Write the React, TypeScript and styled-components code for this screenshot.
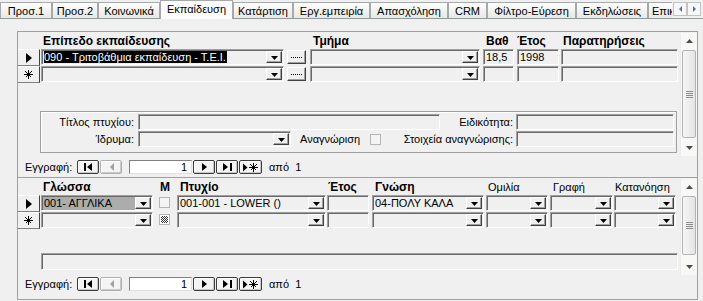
import React from 'react';
import styled, { createGlobalStyle } from 'styled-components';

const GlobalStyle = createGlobalStyle`
  html, body {
    margin: 0;
    padding: 0;
    background: #f0f0f0;
  }
  body {
    font-family: "Liberation Sans", Arial, sans-serif;
    font-size: 11px;
    color: #000;
  }
`;

type Kind = 'combo' | 'text' | 'dots' | 'check';

type Col = {
  key: string;
  w: number;
  ml: number;
  kind: Kind;
  label?: string;
  pad?: number;
  bold?: boolean;
};

type Cell = { value?: string; hl?: 'dark' | 'gray'; state?: 'off' | 'null' };
type Row = { current?: boolean; cells: Record<string, Cell> };

const eduCols: Col[] = [
  { key: 'level', w: 243, ml: 1, kind: 'combo', label: 'Επίπεδο εκπαίδευσης', pad: 2, bold: true },
  { key: 'more', w: 19, ml: 3, kind: 'dots' },
  { key: 'dept', w: 170, ml: 4, kind: 'combo', label: 'Τμήμα', pad: 3, bold: true },
  { key: 'grade', w: 31, ml: 3, kind: 'text', label: 'Βαθ', pad: 3, bold: true },
  { key: 'year', w: 42, ml: 3, kind: 'text', label: 'Έτος', pad: 0, bold: true },
  { key: 'notes', w: 117, ml: 2, kind: 'text', label: 'Παρατηρήσεις', pad: 2, bold: true },
];

const eduRows: Row[] = [
  {
    current: true,
    cells: {
      level: { value: '090 - Τριτοβάθμια εκπαίδευση - Τ.Ε.Ι.', hl: 'dark' },
      grade: { value: '18,5' },
      year: { value: '1998' },
    },
  },
  { cells: {} },
];

const langCols: Col[] = [
  { key: 'lang', w: 112, ml: 1, kind: 'combo', label: 'Γλώσσα', pad: 2, bold: true },
  { key: 'm', w: 11, ml: 6, kind: 'check', label: 'Μ', pad: 1, bold: true },
  { key: 'degree', w: 149, ml: 7, kind: 'combo', label: 'Πτυχίο', pad: 3, bold: true },
  { key: 'year', w: 42, ml: 1, kind: 'text', label: 'Έτος', pad: 1, bold: true },
  { key: 'skill', w: 112, ml: 3, kind: 'combo', label: 'Γνώση', pad: 3, bold: true },
  { key: 'speak', w: 62, ml: 2, kind: 'combo', label: 'Ομιλία', pad: 2 },
  { key: 'write', w: 63, ml: 2, kind: 'combo', label: 'Γραφή', pad: 3 },
  { key: 'read', w: 62, ml: 1, kind: 'combo', label: 'Κατανόηση', pad: 1 },
];

const langRows: Row[] = [
  {
    current: true,
    cells: {
      lang: { value: '001- ΑΓΓΛΙΚΑ', hl: 'gray' },
      m: { state: 'off' },
      degree: { value: '001-001 - LOWER ()' },
      skill: { value: '04-ΠΟΛΥ ΚΑΛΑ' },
    },
  },
  { cells: { m: { state: 'null' } } },
];

const tabs = [
  { label: 'Προσ.1', w: 52 },
  { label: 'Προσ.2', w: 46 },
  { label: 'Κοινωνικά', w: 62 },
  { label: 'Εκπαίδευση', w: 73, active: true },
  { label: 'Κατάρτιση', w: 60 },
  { label: 'Εργ.εμπειρία', w: 77 },
  { label: 'Απασχόληση', w: 78 },
  { label: 'CRM', w: 39 },
  { label: 'Φίλτρο-Εύρεση', w: 89 },
  { label: 'Εκδηλώσεις', w: 72 },
];

/* ---------- window and tabs ---------- */

const Window = styled.div`
  width: 703px;
  height: 301px;
  overflow: hidden;
  background: #f0f0f0;
`;

const TabStrip = styled.div`
  display: flex;
  align-items: flex-end;
  height: 19px;
  background: linear-gradient(to top, #919b9c 1px, transparent 1px);
`;

const Tab = styled.div<{ $w: number; $active?: boolean; $cut?: boolean }>`
  flex: none;
  box-sizing: border-box;
  width: ${p => p.$w}px;
  height: ${p => (p.$active ? 19 : 16)}px;
  margin-bottom: ${p => (p.$active ? 0 : 1)}px;
  padding: 2px 0 0 ${p => (p.$cut ? 3 : 0)}px;
  border: 1px solid #a5a9ab;
  border-bottom: none;
  ${p => p.$cut && 'border-right: none;'}
  background: ${p => (p.$active ? '#fcfcfe' : 'linear-gradient(#ffffff, #f0f0ee 60%, #e8e8e5)')};
  text-align: ${p => (p.$cut ? 'left' : 'center')};
  white-space: nowrap;
  overflow: hidden;
  line-height: 12px;
`;

const TabScroll = styled.div`
  display: flex;
  align-self: flex-start;
  margin-top: 2px;
  margin-left: 1px;
`;

const TabArrow = styled.div`
  display: flex;
  align-items: center;
  justify-content: center;
  box-sizing: border-box;
  width: 14px;
  height: 14px;
  border: 1px solid #c3c3c3;
  background: #f7f7f7;
`;

const Panel = styled.div`
  display: flex;
  flex-direction: column;
  padding: 12px 0 0 17px;
`;

/* ---------- subform frame ---------- */

const SubForm = styled.div<{ $h: number; $joined?: boolean }>`
  display: flex;
  flex-direction: column;
  box-sizing: border-box;
  width: 681px;
  height: ${p => p.$h}px;
  border: 1px solid #a0a0a0;
  ${p => p.$joined && 'border-top: none;'}
`;

const SubBody = styled.div<{ $h: number }>`
  display: flex;
  height: ${p => p.$h}px;
`;

const Content = styled.div`
  flex: 1;
  display: flex;
  flex-direction: column;
`;

const HeaderRow = styled.div`
  display: flex;
  height: 17px;
  padding-left: 22px;
  align-items: center;
`;

const HeaderCell = styled.div<{ $w: number; $ml: number; $pad: number; $bold?: boolean }>`
  flex: none;
  width: ${p => p.$w}px;
  margin-left: ${p => p.$ml}px;
  padding-left: ${p => p.$pad}px;
  box-sizing: border-box;
  white-space: nowrap;
  font-size: ${p => (p.$bold ? 12 : 11)}px;
  font-weight: ${p => (p.$bold ? 700 : 400)};
  line-height: 14px;
`;

const DataRow = styled.div`
  display: flex;
  height: 17px;
`;

const Selector = styled.div`
  flex: none;
  display: flex;
  align-items: center;
  justify-content: center;
  box-sizing: border-box;
  width: 22px;
  height: 17px;
  border-top: 1px solid #ffffff;
  border-right: 1px solid #404040;
  border-bottom: 1px solid #808080;
  background: #f0f0f0;
`;

/* ---------- controls ---------- */

const Field = styled.div<{ $w: number; $ml: number; $h?: number; $mt?: number }>`
  flex: none;
  display: flex;
  align-items: flex-end;
  box-sizing: border-box;
  width: ${p => p.$w}px;
  height: ${p => p.$h ?? 16}px;
  margin-left: ${p => p.$ml}px;
  margin-top: ${p => p.$mt ?? 0}px;
  border: 1px solid;
  border-color: #a0a0a0 #ffffff #ffffff #a0a0a0;
  box-shadow: inset 1px 1px 0 #696969;
  overflow: hidden;
`;

const FieldText = styled.div<{ $gray?: boolean }>`
  flex: 1;
  align-self: stretch;
  margin: 1px 0 0 1px;
  padding: 0 2px 0 1px;
  line-height: 13px;
  white-space: nowrap;
  overflow: hidden;
  background: ${p => (p.$gray ? '#acacac' : 'transparent')};
`;

const Picked = styled.span`
  background: #000;
  color: #fff;
  padding-right: 1px;
`;

const DropButton = styled.div`
  flex: none;
  display: flex;
  align-items: flex-end;
  justify-content: center;
  box-sizing: border-box;
  width: 16px;
  height: 12px;
  margin: 0 1px 1px 0;
  padding-bottom: 2px;
  border: 1px solid;
  border-color: #ffffff #404040 #404040 #ffffff;
  box-shadow: inset -1px -1px 0 #a0a0a0;
  background: #f0f0f0;
`;

const DotsButton = styled.div<{ $w: number; $ml: number }>`
  flex: none;
  display: flex;
  align-items: center;
  justify-content: center;
  box-sizing: border-box;
  width: ${p => p.$w}px;
  height: 14px;
  margin: 1px 0 0 ${p => p.$ml}px;
  border: 1px solid;
  border-color: #ffffff #404040 #404040 #ffffff;
  box-shadow: inset -1px -1px 0 #a0a0a0;
  background: #f0f0f0;

  &::after {
    content: '';
    width: 11px;
    border-top: 1px dotted #000;
  }
`;

const CheckBox = styled.div<{ $w?: number; $ml: number; $null?: boolean; $top?: number }>`
  flex: none;
  box-sizing: border-box;
  width: ${p => p.$w ?? 11}px;
  height: 11px;
  margin-left: ${p => p.$ml}px;
  margin-top: ${p => p.$top ?? 0}px;
  padding: ${p => (p.$null ? '1px' : '0')};
  border: 1px solid #b5b5b5;
  background: ${p =>
    p.$null
      ? 'repeating-conic-gradient(#303030 0 25%, #ffffff 0 50%) 1px 1px / 2px 2px content-box, #ffffff'
      : '#f4f4f4'};
`;

/* ---------- footer group of first subform ---------- */

const Group = styled.div`
  display: flex;
  flex-direction: column;
  gap: 1px;
  box-sizing: border-box;
  width: 637px;
  height: 42px;
  margin: 28px 0 0 22px;
  padding-top: 2px;
  border: 1px solid #a0a0a0;
  box-shadow: inset 1px 1px 0 #ffffff;
`;

const GroupRow = styled.div`
  display: flex;
  align-items: center;
  height: 16px;
`;

const FormLabel = styled.div<{ $w: number; $ml?: number; $left?: boolean }>`
  flex: none;
  box-sizing: border-box;
  width: ${p => p.$w}px;
  margin-left: ${p => p.$ml ?? 0}px;
  padding-right: 1px;
  text-align: ${p => (p.$left ? 'left' : 'right')};
  white-space: nowrap;
  line-height: 13px;
`;

/* ---------- scroll bar ---------- */

const ScrollBar = styled.div<{ $h: number }>`
  flex: none;
  display: flex;
  flex-direction: column;
  width: 16px;
  height: ${p => p.$h}px;
  margin-top: 1px;
  background: #f8f8f6;
  border-left: 1px solid #ececec;
`;

const ScrollArrow = styled.div`
  flex: none;
  display: flex;
  align-items: center;
  justify-content: center;
  height: 16px;
`;

const Thumb = styled.div<{ $h: number }>`
  flex: none;
  display: flex;
  align-items: center;
  justify-content: center;
  box-sizing: border-box;
  height: ${p => p.$h}px;
  margin: 1px 1px 0 1px;
  border: 1px solid #b4b4b4;
  border-radius: 2px;
  background: linear-gradient(to right, #f6f6f6, #e4e4e4);
`;

const Grip = styled.div`
  width: 7px;
  height: 7px;
  background: repeating-linear-gradient(#8c8c8c 0 1px, transparent 1px 2px);
`;

const Track = styled.div`
  flex: 1;
`;

/* ---------- navigation bar ---------- */

const NavBar = styled.div<{ $mt: number }>`
  display: flex;
  align-items: center;
  height: 14px;
  margin-top: ${p => p.$mt}px;
  padding-left: 7px;
`;

const NavLabel = styled.div`
  width: 52px;
  line-height: 13px;
`;

const NavButton = styled.div<{ $ml: number; $w?: number; $off?: boolean }>`
  flex: none;
  display: flex;
  align-items: center;
  justify-content: center;
  box-sizing: border-box;
  width: ${p => p.$w ?? 22}px;
  height: 14px;
  margin-left: ${p => p.$ml}px;
  border: 1px solid ${p => (p.$off ? '#b0b0b0' : '#3c3c3c')};
  border-radius: 2px;
  background: #f4f4f4;
  box-shadow: inset 1px 1px 0 #ffffff, inset -1px -1px 0 #c8c8c8;
`;

const RecordBox = styled.div`
  flex: none;
  box-sizing: border-box;
  width: 63px;
  height: 14px;
  margin-left: 7px;
  padding-right: 4px;
  border: 1px solid;
  border-color: #808080 #e0e0e0 #e0e0e0 #808080;
  background: #ffffff;
  text-align: right;
  line-height: 12px;
`;

const NavCount = styled.div`
  margin-left: 7px;
  white-space: pre;
  line-height: 13px;
`;

/* ---------- drawings ---------- */

const DownTri = () => (
  <svg width="7" height="4" viewBox="0 0 7 4">
    <polygon points="0,0 7,0 3.5,4" fill="#000" />
  </svg>
);

const CurrentMark = () => (
  <svg width="6" height="10" viewBox="0 0 6 10">
    <polygon points="0,0 6,5 0,10" fill="#000" />
  </svg>
);

const Star = ({ x = 0 }: { x?: number }) => (
  <g stroke="#000" strokeWidth="1" shapeRendering="crispEdges" transform={`translate(${x} 0)`}>
    <line x1="4.5" y1="0" x2="4.5" y2="9" />
    <line x1="0" y1="4.5" x2="9" y2="4.5" />
    <line x1="1.5" y1="1.5" x2="7.5" y2="7.5" />
    <line x1="7.5" y1="1.5" x2="1.5" y2="7.5" />
  </g>
);

const NewMark = () => (
  <svg width="9" height="9" viewBox="0 0 9 9">
    <Star />
  </svg>
);

const NavIcon = ({ kind }: { kind: 'first' | 'prev' | 'next' | 'last' | 'new' }) => {
  if (kind === 'first')
    return (
      <svg width="9" height="8" viewBox="0 0 9 8">
        <rect x="0" y="0" width="2" height="8" fill="#000" />
        <polygon points="8,0 8,8 3,4" fill="#000" />
      </svg>
    );
  if (kind === 'prev')
    return (
      <svg width="5" height="8" viewBox="0 0 5 8">
        <polygon points="5,0 5,8 1,4" fill="#a0a0a0" />
      </svg>
    );
  if (kind === 'next')
    return (
      <svg width="5" height="8" viewBox="0 0 5 8">
        <polygon points="0,0 0,8 5,4" fill="#000" />
      </svg>
    );
  if (kind === 'last')
    return (
      <svg width="9" height="8" viewBox="0 0 9 8">
        <polygon points="0,0 0,8 5,4" fill="#000" />
        <rect x="7" y="0" width="2" height="8" fill="#000" />
      </svg>
    );
  return (
    <svg width="15" height="9" viewBox="0 0 15 9">
      <polygon points="0,0.5 0,8.5 4.5,4.5" fill="#000" />
      <Star x={6} />
    </svg>
  );
};

const ScrollTri = ({ up }: { up?: boolean }) => (
  <svg width="7" height="4" viewBox="0 0 7 4">
    <polygon points={up ? '0,4 7,4 3.5,0' : '0,0 7,0 3.5,4'} fill="#4d4d4d" />
  </svg>
);

const TabTri = ({ left }: { left?: boolean }) => (
  <svg width="3" height="6" viewBox="0 0 3 6">
    <polygon points={left ? '3,0 3,6 0,3' : '0,0 0,6 3,3'} fill="#5470a8" />
  </svg>
);

/* ---------- pieces ---------- */

const Combo = ({ w, ml, cell }: { w: number; ml: number; cell?: Cell }) => (
  <Field $w={w} $ml={ml}>
    <FieldText $gray={cell?.hl === 'gray'}>
      {cell?.hl === 'dark' ? <Picked>{cell.value}</Picked> : cell?.value}
    </FieldText>
    <DropButton>
      <DownTri />
    </DropButton>
  </Field>
);

const Control = ({ col, cell }: { col: Col; cell?: Cell }) => {
  if (col.kind === 'combo') return <Combo w={col.w} ml={col.ml} cell={cell} />;
  if (col.kind === 'dots') return <DotsButton $w={col.w} $ml={col.ml} />;
  if (col.kind === 'check')
    return <CheckBox $w={col.w} $ml={col.ml} $top={2} $null={cell?.state === 'null'} />;
  return (
    <Field $w={col.w} $ml={col.ml}>
      <FieldText>{cell?.value}</FieldText>
    </Field>
  );
};

const Sheet = ({ cols, rows }: { cols: Col[]; rows: Row[] }) => (
  <>
    <HeaderRow>
      {cols.map(c => (
        <HeaderCell key={c.key} $w={c.w} $ml={c.ml} $pad={c.pad ?? 0} $bold={c.bold}>
          {c.label}
        </HeaderCell>
      ))}
    </HeaderRow>
    {rows.map((r, i) => (
      <DataRow key={i}>
        <Selector>{r.current ? <CurrentMark /> : <NewMark />}</Selector>
        {cols.map(c => (
          <Control key={c.key} col={c} cell={r.cells[c.key]} />
        ))}
      </DataRow>
    ))}
  </>
);

const Scroll = ({ h, thumb }: { h: number; thumb: number }) => (
  <ScrollBar $h={h}>
    <ScrollArrow>
      <ScrollTri up />
    </ScrollArrow>
    <Thumb $h={thumb}>
      <Grip />
    </Thumb>
    <Track />
    <ScrollArrow>
      <ScrollTri />
    </ScrollArrow>
  </ScrollBar>
);

const Navigator = ({ mt }: { mt: number }) => (
  <NavBar $mt={mt}>
    <NavLabel>Εγγραφή:</NavLabel>
    <NavButton $ml={0}>
      <NavIcon kind="first" />
    </NavButton>
    <NavButton $ml={1} $off>
      <NavIcon kind="prev" />
    </NavButton>
    <RecordBox>1</RecordBox>
    <NavButton $ml={1}>
      <NavIcon kind="next" />
    </NavButton>
    <NavButton $ml={1}>
      <NavIcon kind="last" />
    </NavButton>
    <NavButton $ml={1} $w={23}>
      <NavIcon kind="new" />
    </NavButton>
    <NavCount>από  1</NavCount>
  </NavBar>
);

const App = () => {
  return (
    <Window>
      <GlobalStyle />
      <TabStrip>
        {tabs.map(t => (
          <Tab key={t.label} $w={t.w} $active={t.active}>
            {t.label}
          </Tab>
        ))}
        <Tab $w={24} $cut>
          Επικ
        </Tab>
        <TabScroll>
          <TabArrow>
            <TabTri left />
          </TabArrow>
          <TabArrow>
            <TabTri />
          </TabArrow>
        </TabScroll>
      </TabStrip>

      <Panel>
        <SubForm $h={147}>
          <SubBody $h={124}>
            <Content>
              <Sheet cols={eduCols} rows={eduRows} />
              <Group>
                <GroupRow>
                  <FormLabel $w={94}>Τίτλος πτυχίου:</FormLabel>
                  <Field $w={302} $ml={3} />
                  <FormLabel $w={74}>Ειδικότητα:</FormLabel>
                  <Field $w={158} $ml={2} />
                </GroupRow>
                <GroupRow>
                  <FormLabel $w={94}>Ίδρυμα:</FormLabel>
                  <Combo w={153} ml={3} />
                  <FormLabel $w={70} $ml={9} $left>
                    Αναγνώριση
                  </FormLabel>
                  <CheckBox $ml={0} />
                  <FormLabel $w={133}>Στοιχεία αναγνώρισης:</FormLabel>
                  <Field $w={158} $ml={2} />
                </GroupRow>
              </Group>
            </Content>
            <Scroll h={123} thumb={88} />
          </SubBody>
          <Navigator mt={4} />
        </SubForm>

        <SubForm $h={122} $joined>
          <SubBody $h={98}>
            <Content>
              <Sheet cols={langCols} rows={langRows} />
              <Field $w={637} $ml={23} $h={17} $mt={24} />
            </Content>
            <Scroll h={96} thumb={59} />
          </SubBody>
          <Navigator mt={1} />
        </SubForm>
      </Panel>
    </Window>
  );
};

export default App;
